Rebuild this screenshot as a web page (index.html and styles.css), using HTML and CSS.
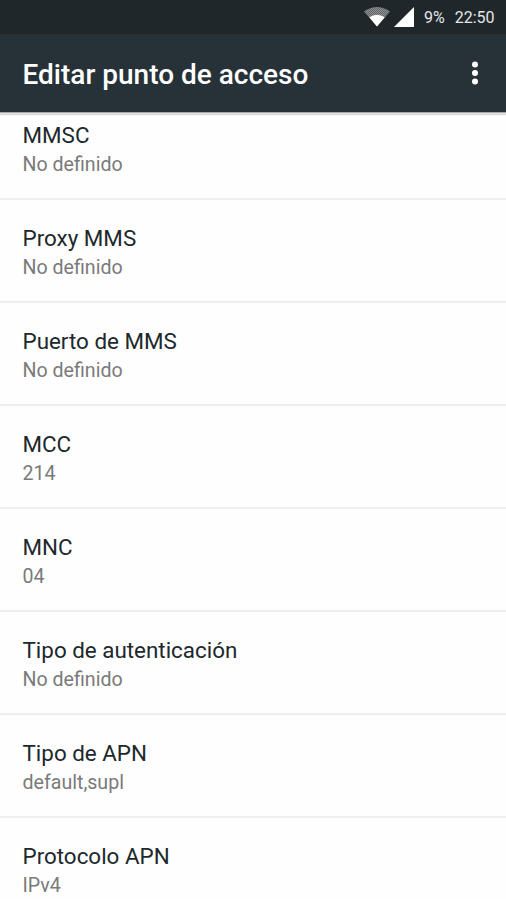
FILE: index.html
```html
<!DOCTYPE html>
<html lang="es">
<head>
<meta charset="utf-8">
<title>Editar punto de acceso</title>
<link rel="stylesheet" href="styles.css">
</head>
<body>
<div class="screen">
  <div class="status">
    <svg class="wifi" width="26" height="20" viewBox="0 0 26 20">
      <defs>
        <pattern id="dots" width="2" height="2" patternUnits="userSpaceOnUse">
          <rect width="2" height="2" fill="#63676a"/>
          <rect width="1" height="1" fill="#8d9092"/>
          <rect x="1" y="1" width="1" height="1" fill="#8d9092"/>
        </pattern>
      </defs>
      <path d="M0 4.6Q13 -4.6 26 4.6L13 19.5Z" fill="url(#dots)"/>
      <path d="M5.3 10.3Q13 5.2 20.7 10.3L13 19.5Z" fill="#fff"/>
    </svg>
    <svg class="signal" width="20" height="20" viewBox="0 0 20 20">
      <path d="M0 20L20 0V20Z" fill="#fff"/>
    </svg>
    <span class="battery">9%</span>
    <span class="clock">22:50</span>
  </div>
  <header class="toolbar">
    <h1>Editar punto de acceso</h1>
    <svg class="more" width="8" height="24" viewBox="0 0 8 24">
      <circle cx="4" cy="3.5" r="3"/><circle cx="4" cy="12" r="3"/><circle cx="4" cy="20.5" r="3"/>
    </svg>
  </header>
  <main class="viewport">
    <ul class="list">
      <li><div class="name">MMSC</div><div class="value">No definido</div></li>
      <li><div class="name">Proxy MMS</div><div class="value">No definido</div></li>
      <li><div class="name">Puerto de MMS</div><div class="value">No definido</div></li>
      <li><div class="name">MCC</div><div class="value">214</div></li>
      <li><div class="name">MNC</div><div class="value">04</div></li>
      <li><div class="name">Tipo de autenticación</div><div class="value">No definido</div></li>
      <li><div class="name">Tipo de APN</div><div class="value">default,supl</div></li>
      <li><div class="name">Protocolo APN</div><div class="value">IPv4</div></li>
    </ul>
  </main>
</div>
</body>
</html>
```
FILE: styles.css
```css
* { box-sizing: border-box; }
body { margin: 0; background: #fefefe; font-family: Roboto, sans-serif; }
.screen { height: 899px; overflow: hidden; display: flex; flex-direction: column; }
.status {
  flex: none; height: 34px; padding: 0 11.5px 0 0; background: #20272b; color: #e4e5e6;
  display: flex; justify-content: flex-end; align-items: center; font-size: 16px; line-height: 20px;
}
.status span { padding-top: 1px; }
.wifi { margin-right: 4px; }
.signal { margin-right: 10px; }
.battery { margin-right: 10px; }
.toolbar {
  flex: none; height: 78px; padding: 0 27px 0 22.5px; background: #273238; color: #fff;
  display: flex; justify-content: space-between; align-items: center;
  position: relative; z-index: 1; box-shadow: 0 1px 0 #a8aaa9, 0 3px 0 #dcdcdb, 0 4px 0 #f3f3f3;
}
.toolbar h1 { margin: 0; padding-top: 3px; font-size: 28px; line-height: 34px; font-weight: 500; }
.more { fill: #fff; }
.viewport { flex: 1; min-height: 0; overflow: hidden; }
.list { list-style: none; margin: -15px 0 0; padding: 0; }
.list li { height: 103px; padding: 24px 22.5px 0; border-bottom: 2px solid #efefef; }
.name { font-size: 22.4px; line-height: 28px; color: #20282c; }
.value { margin-top: 1.5px; font-size: 19.6px; line-height: 28px; color: #7a7a7a; }
```
